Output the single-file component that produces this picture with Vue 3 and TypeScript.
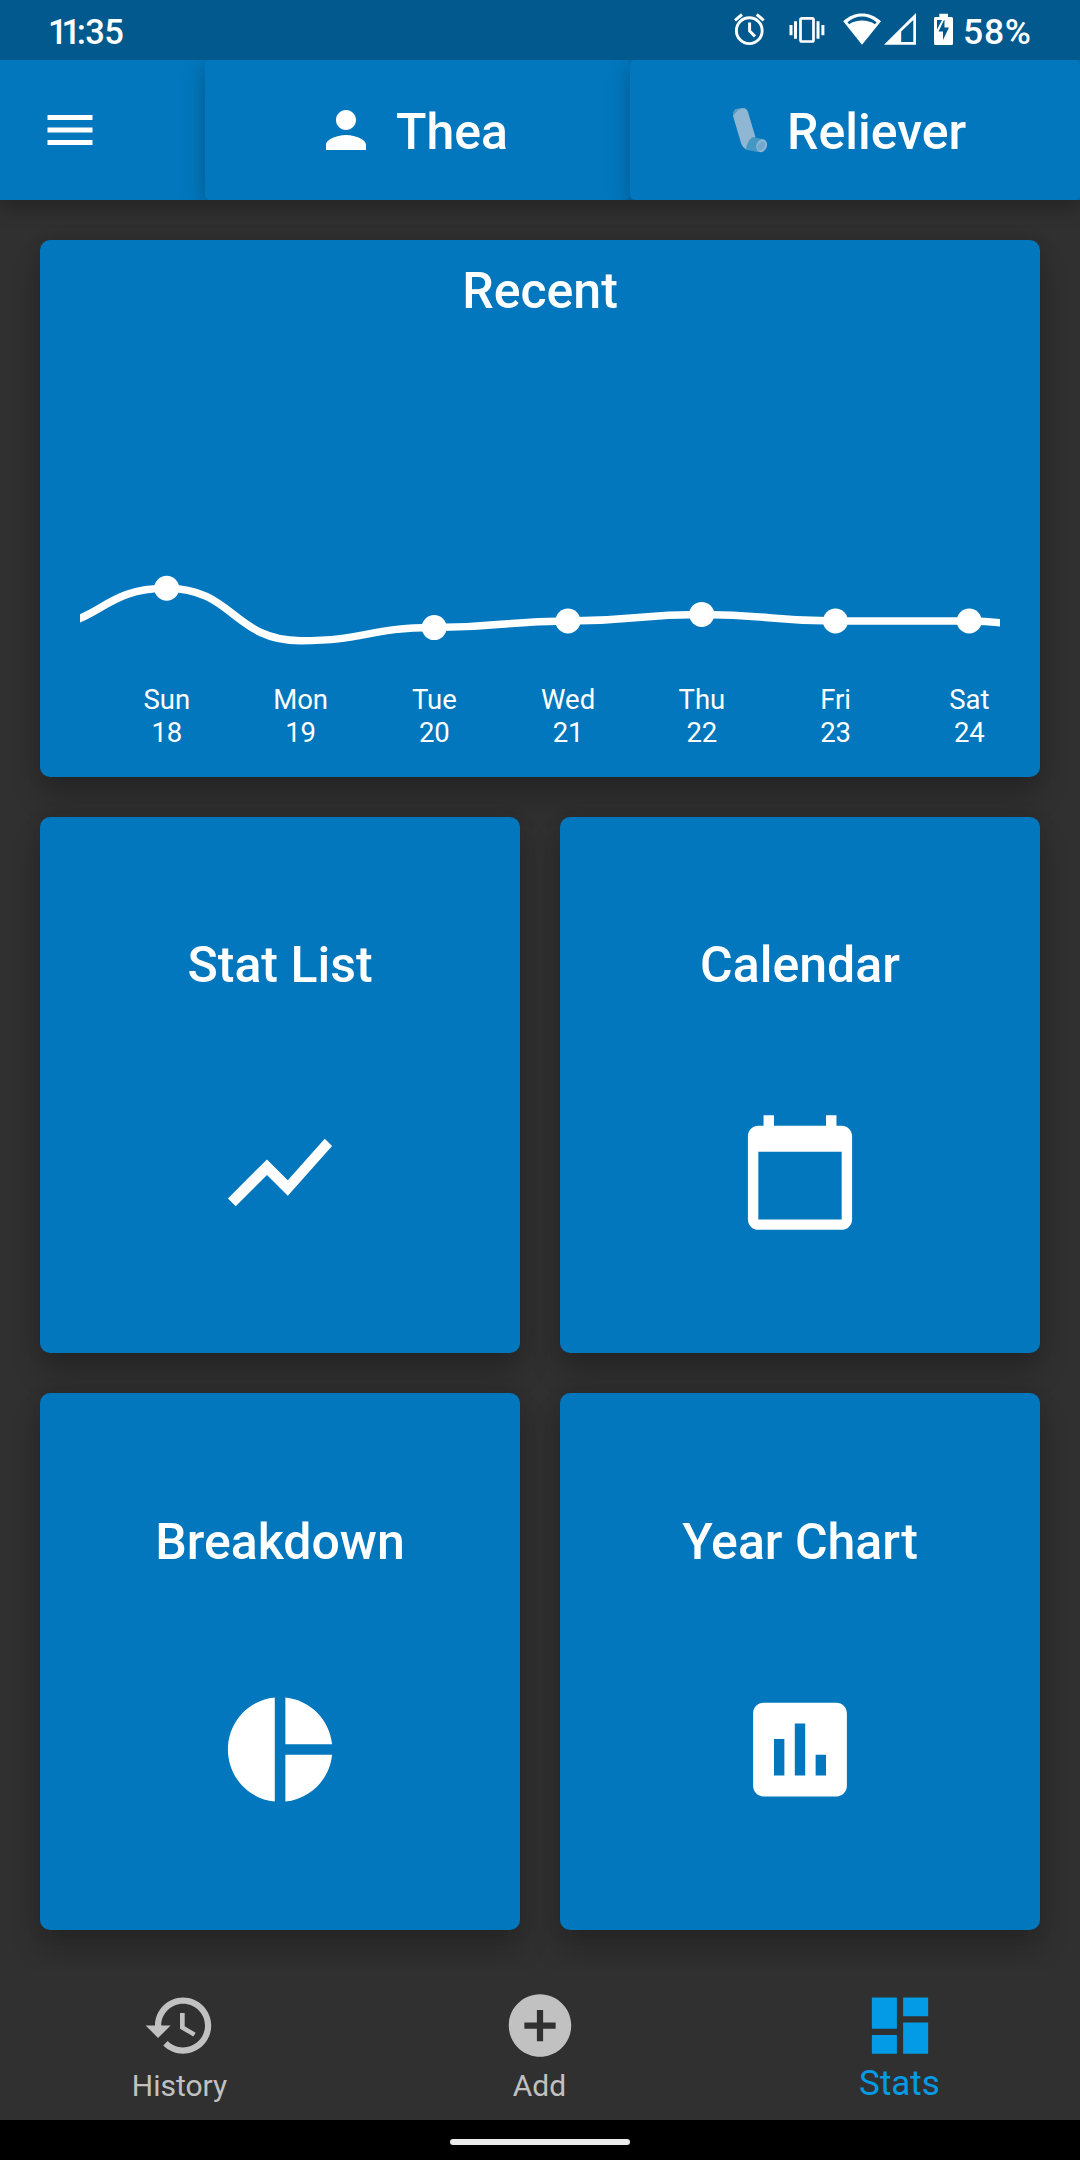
<script setup lang="ts">
interface Day {
  name: string
  date: number
  puffs: number
}

interface Tile {
  title: string
  path: string
}

const week: Day[] = [
  { name: 'Sun', date: 18, puffs: 8 },
  { name: 'Mon', date: 19, puffs: 0 },
  { name: 'Tue', date: 20, puffs: 2 },
  { name: 'Wed', date: 21, puffs: 3 },
  { name: 'Thu', date: 22, puffs: 4 },
  { name: 'Fri', date: 23, puffs: 3 },
  { name: 'Sat', date: 24, puffs: 3 },
]

const step = 133.75
const firstX = 86.7
const zeroY = 301.7
const unit = 6.56

const xAt = (i: number): number => firstX + i * step
const yAt = (puffs: number): number => zeroY - puffs * unit

// The neighbours outside the visible week let the line run off both edges.
const series: number[] = [2, ...week.map((d) => d.puffs), 0]
const linePath: string = series
  .map((v, n) => {
    const x = xAt(n - 1)
    const y = yAt(v)
    if (n === 0) return `M${x} ${y}`
    return `C${x - step / 2} ${yAt(series[n - 1])} ${x - step / 2} ${y} ${x} ${y}`
  })
  .join('')

const points = week
  .map((d, i) => ({ x: xAt(i), y: yAt(d.puffs), puffs: d.puffs }))
  .filter((p) => p.puffs > 0)

const tiles: Tile[] = [
  { title: 'Stat List', path: 'M3.5 18.49l6-6.01 4 4L22 6.92l-1.41-1.41-7.09 7.97-4-4L2 16.99z' },
  {
    title: 'Calendar',
    path: 'M20 3h-1V1h-2v2H7V1H5v2H4c-1.1 0-2 .9-2 2v16c0 1.1.9 2 2 2h16c1.1 0 2-.9 2-2V5c0-1.1-.9-2-2-2zm0 18H4V8h16v13z',
  },
  {
    title: 'Breakdown',
    path: 'M11 2v20c-5.07-.5-9-4.79-9-10s3.93-9.5 9-10zm2.03 0v8.99H22c-.47-4.74-4.24-8.52-8.97-8.99zm0 11.01V22c4.74-.47 8.5-4.25 8.97-8.99h-8.97z',
  },
  {
    title: 'Year Chart',
    path: 'M19 3H5c-1.1 0-2 .9-2 2v14c0 1.1.9 2 2 2h14c1.1 0 2-.9 2-2V5c0-1.1-.9-2-2-2zM9 17H7v-7h2v7zm4 0h-2V7h2v10zm4 0h-2v-4h2v4z',
  },
]

const navItems = [
  {
    label: 'History',
    active: false,
    path: 'M13 3c-4.97 0-9 4.03-9 9H1l3.89 3.89.07.14L9 12H6c0-3.87 3.13-7 7-7s7 3.13 7 7-3.13 7-7 7c-1.93 0-3.68-.79-4.94-2.06l-1.42 1.42C8.27 19.99 10.51 21 13 21c4.97 0 9-4.03 9-9s-4.03-9-9-9zm-1 5v5l4.28 2.54.72-1.21-3.5-2.08V8H12z',
  },
  {
    label: 'Add',
    active: false,
    path: 'M12 2C6.48 2 2 6.48 2 12s4.48 10 10 10 10-4.48 10-10S17.52 2 12 2zm5 11h-4v4h-2v-4H7v-2h4V7h2v4h4v2z',
  },
  { label: 'Stats', active: true, path: 'M3 13h8V3H3v10zm0 8h8v-6H3v6zm10 0h8V11h-8v10zm0-18v6h8V3h-8z' },
]
</script>

<template>
  <div class="screen">
    <div class="status">
      <div class="clock"><span class="tight">1</span><span class="one">1</span>:35</div>
      <svg class="status-icons" width="230" height="60" viewBox="730 0 230 60">
        <g fill="none" stroke="#fff">
          <circle cx="749.3" cy="30.7" r="12.9" stroke-width="2.9" />
          <path d="M749.6 22.5V31l5.4 5.4" stroke-width="3" />
          <path d="M735 20.3l7-5.8M763.7 20.3l-7-5.8" stroke-width="3" />
          <rect x="800.5" y="18.3" width="13" height="23.2" rx="1.5" stroke-width="2.7" />
          <path d="M795.5 21.3v17.4M818 21.3v17.4M791 25v10.3M822.9 25v10.3" stroke-width="3" />
        </g>
        <g fill="#fff" fill-rule="evenodd">
          <path d="M843.2 21.3C854 10.9 870 10.9 881 21.3L862 44.8zM847.5 22.3l1.6 2C856.5 19.3 867.5 19.3 875 24.3l1.6-2C868 14.7 856 14.7 847.5 22.3z" />
          <path d="M884 44.8L916 13V44.8zM901.2 31.5V42H913.3V20z" />
          <path d="M939.3 13.7h8.7v3.3h3.5q1.5 0 1.5 1.5V43.5q0 1.5-1.5 1.5H935.5q-1.5 0-1.5-1.5V18.5q0-1.5 1.5-1.5h3.8zM937 20v9.5l5-9.5zM950 20h-5.5v7.5h4.5L943 40v-8.5h-4.5L944 20z" />
        </g>
      </svg>
      <div class="battery">58%</div>
    </div>

    <header class="bar">
      <div class="menu">
        <svg width="60" height="60" viewBox="0 0 24 24">
          <path d="M3 18h18v-2H3v2zm0-5h18v-2H3v2zm0-7v2h18V6H3z" fill="#fff" />
        </svg>
      </div>
      <div class="tabs">
        <div class="tab person">
          <svg width="60" height="60" viewBox="0 0 24 24">
            <path d="M12 12c2.21 0 4-1.79 4-4s-1.79-4-4-4-4 1.79-4 4 1.79 4 4 4zm0 2c-2.67 0-8 1.34-8 4v2h16v-2c0-2.66-5.33-4-8-4z" fill="#fff" />
          </svg>
          <span>Thea</span>
        </div>
        <div class="tab medicine">
          <svg width="60" height="60" viewBox="21 30 180 180">
            <path d="M99 68L105 58Q120 53 133 54L126 64L100 80z" fill="#5b9dc2" />
            <path d="M99 77L115 61Q124 54 134 55Q141 57 144 66L166 140L150 180L137 178Q127 170 124 162z" fill="#8fb6d2" />
            <path d="M138 179Q140 155 158 141L188 147Q202 155 194 172Q188 188 172 186z" fill="#4498c3" />
            <ellipse cx="185" cy="167" rx="15.5" ry="20" transform="rotate(22 185 167)" fill="#90b6d6" />
            <ellipse cx="184" cy="168" rx="10" ry="15" transform="rotate(32 184 168)" fill="#72a7cf" />
          </svg>
          <span>Reliever</span>
        </div>
      </div>
    </header>

    <main class="grid">
      <section class="card recent">
        <h2>Recent</h2>
        <svg class="chart" width="920" height="376" viewBox="0 0 920 376">
          <path :d="linePath" fill="none" stroke="#fff" stroke-width="7.5" />
          <circle v-for="p in points" :key="p.x" :cx="p.x" :cy="p.y" r="12.5" fill="#fff" />
        </svg>
        <div class="days">
          <div v-for="d in week" :key="d.date" class="day">
            <span>{{ d.name }}</span>
            <span>{{ d.date }}</span>
          </div>
        </div>
      </section>
      <section v-for="t in tiles" :key="t.title" class="card tile">
        <h2>{{ t.title }}</h2>
        <svg width="126" height="125" viewBox="0 0 24 24"><path :d="t.path" fill="#fff" /></svg>
      </section>
    </main>

    <nav class="nav">
      <div v-for="n in navItems" :key="n.label" class="item" :class="{ active: n.active }">
        <svg width="76" height="75" viewBox="0 0 24 24"><path :d="n.path" fill="currentColor" /></svg>
        <span>{{ n.label }}</span>
      </div>
    </nav>
    <div class="gesture"><div class="handle"></div></div>
  </div>
</template>

<style>
body {
  margin: 0;
  background: #303030;
}
</style>

<style scoped>
.screen {
  width: 1080px;
  height: 2160px;
  display: flex;
  flex-direction: column;
  overflow: hidden;
  background: #303030;
  color: #fff;
  font-family: Roboto, "Liberation Sans", sans-serif;
}
svg {
  display: block;
  flex: none;
}
.status {
  height: 60px;
  flex: none;
  display: flex;
  align-items: center;
  background: #01598e;
  font-size: 34.5px;
  font-weight: 500;
  line-height: 60px;
}
.clock {
  width: 682px;
  padding-left: 48px;
  padding-top: 3px;
  letter-spacing: -0.6px;
}
.tight {
  letter-spacing: -6px;
}
.one {
  letter-spacing: -4.5px;
}
.battery {
  margin-left: 3px;
  padding-top: 3px;
  font-size: 35.5px;
  letter-spacing: 0.7px;
}
.bar {
  height: 140px;
  flex: none;
  display: flex;
  position: relative;
  z-index: 1;
  background: #0277bd;
  box-shadow: 0 5px 20px rgba(0, 0, 0, 0.3);
  clip-path: inset(0 0 -40px 0);
}
.menu {
  width: 125px;
  padding-left: 40px;
  display: flex;
  align-items: center;
}
.tabs {
  width: 875px;
  padding-left: 40px;
  display: flex;
  overflow: hidden;
}
.tab {
  box-sizing: border-box;
  display: flex;
  align-items: center;
  gap: 20px;
  background: #0277bd;
  border-radius: 5px;
  font-size: 50px;
  font-weight: 500;
  line-height: 59px;
  box-shadow: 0 6px 22px rgba(0, 0, 0, 0.26);
}
.person {
  width: 425px;
  padding-left: 111px;
}
.medicine {
  width: 450px;
  padding-left: 77px;
}
.tab span {
  padding-top: 5px;
}
.grid {
  height: 1690px;
  flex: none;
  padding: 40px;
  display: grid;
  grid-template-columns: 1fr 1fr;
  grid-template-rows: repeat(3, 1fr);
  gap: 40px;
}
.card {
  min-height: 0;
  background: #0277bd;
  border-radius: 10px;
  box-shadow: 0 20px 30px rgba(0, 0, 0, 0.2), 0 0 18px rgba(0, 0, 0, 0.1);
}
h2 {
  box-sizing: border-box;
  height: 59px;
  flex: none;
  margin: 0;
  padding-top: 2px;
  font-size: 50px;
  font-weight: 500;
  line-height: 59px;
  text-align: center;
}
.recent {
  grid-column: 1 / 3;
  padding: 20px 40px 0;
}
.chart {
  margin-top: 20px;
}
.days {
  display: flex;
  margin-top: -32px;
  padding-left: 20px;
}
.day {
  width: 133.75px;
  flex: none;
  display: flex;
  flex-direction: column;
  align-items: center;
  font-size: 27.5px;
  line-height: 33px;
}
.tile {
  display: flex;
  flex-direction: column;
  align-items: center;
  justify-content: space-evenly;
  padding-bottom: 1px;
}
.nav {
  height: 150px;
  flex: none;
  display: flex;
  position: relative;
  z-index: 1;
  background: #303030;
  color: #c1c1c1;
}
.item {
  flex: 1;
  display: flex;
  flex-direction: column;
  align-items: center;
  padding-top: 17.5px;
  font-size: 30px;
  line-height: 36px;
}
.item span {
  margin-top: 5px;
  padding-right: 1px;
}
.active {
  color: #039be5;
  font-size: 35px;
}
.active span {
  margin-top: 3px;
}
.gesture {
  height: 40px;
  flex: none;
  display: flex;
  align-items: center;
  justify-content: center;
  background: #000;
}
.handle {
  width: 180px;
  height: 6px;
  margin-top: 4px;
  border-radius: 3px;
  background: #ececec;
}
</style>
